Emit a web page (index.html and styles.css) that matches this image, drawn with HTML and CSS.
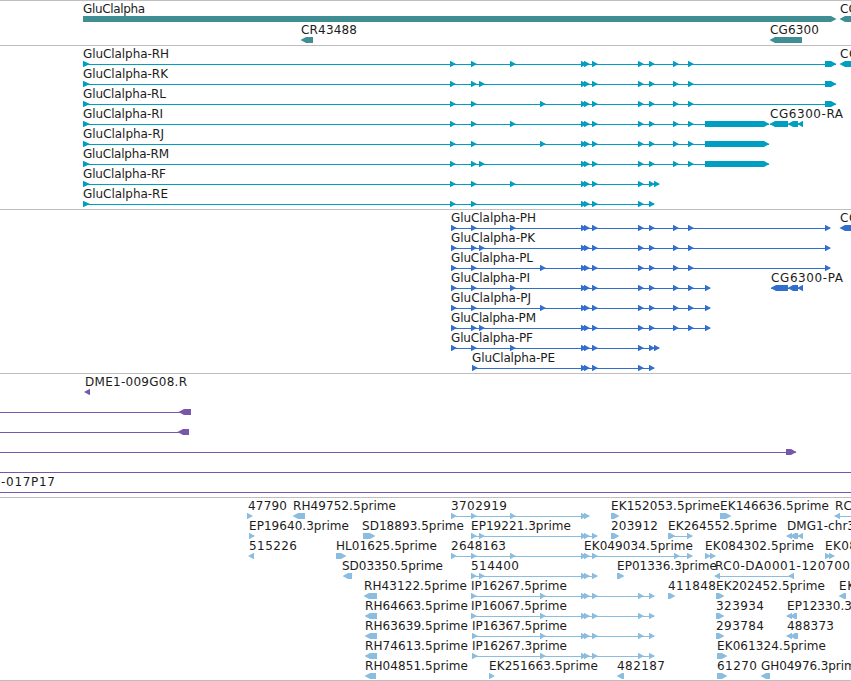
FILE: index.html
```
<!DOCTYPE html>
<html lang="en">
<head>
    <meta charset="UTF-8">
    <meta name="viewport" content="width=device-width, initial-scale=1.0">
    <title>GluClalpha - Genome Browser</title>
    <link rel="stylesheet" href="styles.css">
</head>
<body>
    <main>
        <section class="track gene" id="gene"></section>
        <section class="track rna" id="rna"></section>
        <section class="track protein" id="protein"></section>
        <section class="track clone" id="clone"></section>
        <section class="track est" id="est"></section>
    </main>
    <script src="tracks.js"></script>
</body>
</html>
```
FILE: styles.css
```
body {
    margin: 0;
    background-color: #fff;
    overflow: hidden;
}
main {
    display: flex;
    flex-direction: column;
    border-bottom: 1px solid #bebebe;
}
.track {
    display: flex;
    flex-direction: column;
    border-top: 1px solid #bebebe;
    padding-bottom: 3px;
}
.row {
    display: block;
    width: 100%;
    height: 20px;
    overflow: visible;
}
.row text {
    font-family: "DejaVu Sans", Verdana, sans-serif;
    font-size: 12px;
    fill: #1c1c1c;
}
.gene {
    gap: 1px;
    padding-bottom: 3px;
    color: #3e8e94;
}
.rna {
    color: #009fc2;
}
.protein {
    color: #326ecd;
}
.clone {
    color: #7757aa;
}
.est {
    padding-bottom: 2px;
    color: #8abddf;
}
.shape {
    fill: currentColor;
}
```
FILE: tracks.js
```
// Feature: [label, label start, label end, strand, parts, line start, line end]
// A part is [start, end]. The line defaults to the span of the parts.
function feature(label, x1, x2, strand, parts, from, to) {
    return { label, x1, x2, strand, parts, from, to };
}

// Turns a list of starts into 5px wide exons
function exons(...starts) {
    return starts.map(s => [s, s + 5]);
}

const shared = [581, 584, 592, 638, 649];
const rest = [673, 688];
const tail = [[825, 836]];
const longTail = [[705, 769]];

function rna(name, end, extra, last) {
    return feature('GluClalpha-' + name, 83, end, 1,
        [[83, 89], ...exons(450, 471, ...extra), ...last]);
}

function protein(name, end, extra, last) {
    return feature('GluClalpha-' + name, 451, end, 1,
        exons(451, 471, ...extra, ...last));
}

function ip(name, start) {
    return feature(name, start, 567, 1, exons(start, 540, ...shared));
}

const tracks = {
    gene: [
        [feature('GluClalpha', 83, 145, 1, [[83, 836]]), feature('CG6301', 840, 889, -1, [[840, 870]])],
        [feature('CR43488', 301, 357, -1, [[301, 313]]), feature('CG6300', 770, 819, -1, [[770, 802]])]
    ],
    rna: [
        [rna('RH', 169, [510, ...shared, ...rest], tail), feature('CG6301-RA', 840, 913, -1, [[840, 870]])],
        [rna('RK', 168, [479, ...shared, ...rest], tail)],
        [rna('RL', 166, [540, ...shared, ...rest], tail)],
        [rna('RI', 163, [510, ...shared, ...rest], longTail),
            feature('CG6300-RA', 770, 843, -1, [[770, 788], [788, 798], [798, 803]])],
        [rna('RJ', 164, [540, ...shared, ...rest], longTail)],
        [rna('RM', 169, [479, ...shared, ...rest], longTail)],
        [rna('RF', 166, [510, ...shared], exons(654))],
        [rna('RE', 168, shared, [])]
    ],
    protein: [
        [protein('PH', 536, [510, ...shared, ...rest], [825]), feature('CG6301-PA', 840, 913, -1, [[840, 870]])],
        [protein('PK', 535, [479, ...shared, ...rest], [825])],
        [protein('PL', 533, [540, ...shared, ...rest], [825])],
        [protein('PI', 530, [510, ...shared, ...rest], [705]),
            feature('CG6300-PA', 771, 843, -1, [[771, 788], [788, 798], [798, 803]])],
        [protein('PJ', 531, [540, ...shared, ...rest], [705])],
        [protein('PM', 536, [479, ...shared, ...rest], [705])],
        [protein('PF', 533, [510, ...shared], [654])],
        [feature('GluClalpha-PE', 472, 555, 1, exons(472, ...shared))]
    ],
    clone: [
        [feature('DME1-009G08.R', 85, 187, -1, [[85, 90]])],
        [feature('', 0, 0, -1, [[179, 191]], 0)],
        [feature('', 0, 0, -1, [[178, 189]], 0)],
        [feature('', 0, 0, 1, [[786, 796]], 0)],
        [feature('', 0, 0, 1, [], 0, 851)],
        [feature('-017P17', 1, 55, 1, [], 0, 851)]
    ],
    est: [
        [
            feature('47790', 248, 287, 1, [[247, 252]]),
            feature('RH49752.5prime', 293, 396, -1, [[293, 305]]),
            feature('3702919', 451, 507, 1, exons(451, 471, 510, 581, 584)),
            feature('EK152053.5prime', 611, 720, 1, [[611, 619]]),
            feature('EK146636.5prime', 720, 829, 1, [[720, 731]]),
            feature('RC', 835, 852, -1, [[835, 840]], 835, 851)
        ],
        [
            feature('EP19640.3prime', 249, 349, 1, [[249, 254]]),
            feature('SD18893.5prime', 362, 464, 1, [[363, 375]]),
            feature('EP19221.3prime', 471, 571, 1, exons(471, 479, 581, 584, 592)),
            feature('203912', 611, 658, 1, [[611, 619]]),
            feature('EK264552.5prime', 668, 777, 1, [[668, 675], [687, 692]]),
            feature('DMG1-chr3', 787, 855, -1, [[787, 792], [790, 798], [798, 803]])
        ],
        [
            feature('515226', 249, 297, -1, [[249, 254]]),
            feature('HL01625.5prime', 336, 437, 1, [[336, 346]]),
            feature('2648163', 451, 506, 1, exons(451, 471, 510, 581)),
            feature('EK049034.5prime', 584, 693, 1, exons(584, 592, 674, 687)),
            feature('EK084302.5prime', 705, 814, 1, [[705, 710], [710, 715]]),
            feature('EK08', 825, 857, 1, [[825, 830], [829, 834]])
        ],
        [
            feature('SD03350.5prime', 342, 443, -1, [[343, 352]]),
            feature('514400', 471, 519, 1, exons(471, 479, 581, 584, 592)),
            feature('EP01336.3prime', 617, 717, 1, [[617, 624]]),
            feature('RC0-DA0001-120700', 715, 850, -1, exons(715, 789))
        ],
        [
            feature('RH43122.5prime', 364, 467, -1, [[364, 377]]),
            ip('IP16267.5prime', 471),
            feature('411848', 668, 716, 1, [[668, 675]]),
            feature('EK202452.5prime', 716, 825, 1, [[716, 724]]),
            feature('EK', 839, 855, -1, [[839, 846]])
        ],
        [
            feature('RH64663.5prime', 365, 468, -1, [[365, 377]]),
            ip('IP16067.5prime', 471),
            feature('323934', 716, 764, 1, [[716, 724]]),
            feature('EP12330.3', 787, 852, -1, [[787, 792], [790, 797]])
        ],
        [
            feature('RH63639.5prime', 365, 468, -1, [[365, 377]]),
            ip('IP16367.5prime', 472),
            feature('293784', 716, 764, 1, [[716, 724]]),
            feature('488373', 787, 834, -1, [[787, 792], [790, 798]])
        ],
        [
            feature('RH74613.5prime', 365, 468, -1, [[365, 377]]),
            ip('IP16267.3prime', 472),
            feature('EK061324.5prime', 717, 826, 1, [[717, 727]])
        ],
        [
            feature('RH04851.5prime', 365, 468, -1, [[365, 376]]),
            feature('EK251663.5prime', 489, 598, 1, [[489, 494]]),
            feature('482187', 617, 665, -1, [[617, 624]]),
            feature('61270', 717, 757, 1, [[717, 727]]),
            feature('GH04976.3prime', 761, 863, -1, [[761, 770]])
        ]
    ]
};

// Block with a pointed end, 6px high. Short ones are plain triangles.
function arrow(start, end, strand) {
    const head = Math.min(6, end - start);
    const short = end - start <= 6;
    if (strand > 0) {
        const neck = short ? start + 0.5 : end - head + 1;
        const tip = short ? end + 1 : end + 0.5;
        return `<polygon class="shape" points="${start},15 ${neck},15 ${tip},18 ${neck},21 ${start},21"/>`;
    }
    const neck = short ? end - 0.5 : start + head - 1;
    const tip = short ? start - 1 : start - 0.5;
    return `<polygon class="shape" points="${end},15 ${neck},15 ${tip},18 ${neck},21 ${end},21"/>`;
}

function drawFeature(f) {
    let out = '';
    const from = f.from ?? f.parts[0][0];
    const to = f.to ?? f.parts[f.parts.length - 1][1];
    if (f.parts.length !== 1 || f.from !== undefined) {
        out += `<rect class="shape" x="${from}" y="18" width="${to - from}" height="1"/>`;
    }
    f.parts.forEach(p => {
        out += arrow(p[0], p[1], f.strand);
    });
    if (f.label) {
        out += `<text x="${f.x1}" y="12" textLength="${f.x2 - f.x1}">${f.label}</text>`;
    }
    return out;
}

Object.keys(tracks).forEach(id => {
    document.getElementById(id).innerHTML = tracks[id]
        .map(row => `<svg class="row">${row.map(drawFeature).join('')}</svg>`)
        .join('');
});
```
